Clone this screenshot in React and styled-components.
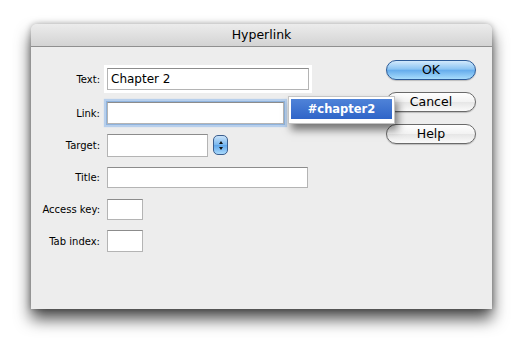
import styled, { createGlobalStyle } from "styled-components"

const Global = createGlobalStyle`
  html, body { margin: 0; padding: 0; background: #fff; }
  body { font-family: "Lucida Grande", "DejaVu Sans", sans-serif; color: #000; }
`

const Page = styled.div`
  width: 519px;
  height: 340px;
  padding: 24px 0 0 31px;
  box-sizing: border-box;
`

const Window = styled.div`
  width: 461px;
  height: 285px;
  display: flex;
  flex-direction: column;
  border-radius: 6px 6px 0 0;
  background: #ededed;
  box-shadow: 0 10px 16px rgba(0, 0, 0, 0.7), 0 0 6px rgba(0, 0, 0, 0.3);
`

const TitleBar = styled.div`
  height: 22px;
  flex: none;
  border-radius: 6px 6px 0 0;
  border-bottom: 1px solid #8f8f8f;
  background: linear-gradient(#ececec, #d3d3d3);
  font-size: 12.5px;
  line-height: 22px;
  text-align: center;
`

const Body = styled.div`
  flex: 1;
  display: flex;
  justify-content: space-between;
  padding: 13px 16px 0 0;
`

const Form = styled.div`
  display: flex;
  flex-direction: column;
  margin-top: 3px;
`

const Row = styled.div`
  display: grid;
  grid-template-columns: 69px auto;
  column-gap: 7px;
  align-items: center;
  height: 32px;
  margin-bottom: ${p => p.$gap || 0}px;
`

const Label = styled.label`
  font-size: 10px;
  text-align: right;
`

const FieldWrap = styled.div`
  position: relative;
  display: flex;
  align-items: center;
  gap: 5px;
`

const Field = styled.input`
  box-sizing: border-box;
  width: ${p => p.$w}px;
  height: ${p => p.$h || 22}px;
  margin: 0;
  padding: 0 3px;
  border: 1px solid #b4b4b4;
  border-top-color: #8c8c8c;
  background: #fff;
  font-family: "Lucida Grande", "DejaVu Sans", sans-serif;
  font-size: 12px;
  outline: none;
  box-shadow: ${p =>
    p.$ring === "blue"
      ? "0 0 0 1px #8fb3dd, 0 0 1px 3px #b7cfec"
      : p.$ring === "white"
      ? "0 0 0 3px #fff"
      : "none"};
`

const Stepper = styled.div`
  width: 15px;
  height: 20px;
  box-sizing: border-box;
  border: 1px solid #3b5e8e;
  border-radius: 5px;
  background: linear-gradient(#c9e3fa, #79b7ee 50%, #5ea6ea 51%, #a9d9fb);
  display: flex;
  flex-direction: column;
  align-items: center;
  justify-content: center;
  gap: 3px;
`

const Arrow = styled.div`
  width: 0;
  height: 0;
  border-left: 2.5px solid transparent;
  border-right: 2.5px solid transparent;
  ${p => (p.$down ? "border-top: 3px solid #111;" : "border-bottom: 3px solid #111;")}
`

const Popup = styled.div`
  position: absolute;
  left: 181px;
  top: -6px;
  width: 107px;
  height: 28px;
  box-sizing: border-box;
  padding: 2px;
  background: #fff;
  border: 1px solid #c4c4c4;
  box-shadow: 3px 6px 8px rgba(0, 0, 0, 0.5);
  z-index: 2;
`

const Option = styled.div`
  height: 20px;
  background: linear-gradient(#4f83d8, #2f65c8);
  color: #fff;
  font-weight: bold;
  font-size: 11.5px;
  line-height: 20px;
  text-align: center;
`

const Buttons = styled.div`
  display: flex;
  flex-direction: column;
  gap: 12px;
`

const Button = styled.button`
  width: 90px;
  height: 20px;
  margin: 0;
  padding: 0;
  border-radius: 10px;
  font-family: "Lucida Grande", "DejaVu Sans", sans-serif;
  font-size: 12.5px;
  line-height: 18px;
  color: #000;
  border: 1px solid ${p => (p.$primary ? "#2c5b98" : "#6a6a6a")};
  background: ${p =>
    p.$primary
      ? "linear-gradient(#d2e9fc, #8cc5f3 45%, #66adec 52%, #a7dcfc)"
      : "linear-gradient(#ffffff, #f2f2f2 50%, #e6e6e6 52%, #fafafa)"};
  box-shadow: 0 1px 1px rgba(0, 0, 0, 0.2);
`

export default function App() {
  return (
    <Page>
      <Global />
      <Window>
        <TitleBar>Hyperlink</TitleBar>
        <Body>
          <Form>
            <Row $gap={2}>
              <Label>Text:</Label>
              <FieldWrap>
                <Field $w={202} $h={22} $ring="white" defaultValue="Chapter 2" />
              </FieldWrap>
            </Row>
            <Row>
              <Label>Link:</Label>
              <FieldWrap>
                <Field $w={177} $h={22} $ring="blue" />
                <Popup>
                  <Option>#chapter2</Option>
                </Popup>
              </FieldWrap>
            </Row>
            <Row>
              <Label>Target:</Label>
              <FieldWrap>
                <Field $w={101} $h={23} />
                <Stepper>
                  <Arrow />
                  <Arrow $down />
                </Stepper>
              </FieldWrap>
            </Row>
            <Row>
              <Label>Title:</Label>
              <FieldWrap>
                <Field $w={201} $h={21} />
              </FieldWrap>
            </Row>
            <Row>
              <Label>Access key:</Label>
              <FieldWrap>
                <Field $w={36} $h={21} />
              </FieldWrap>
            </Row>
            <Row>
              <Label>Tab index:</Label>
              <FieldWrap>
                <Field $w={36} $h={22} />
              </FieldWrap>
            </Row>
          </Form>
          <Buttons>
            <Button $primary>OK</Button>
            <Button>Cancel</Button>
            <Button>Help</Button>
          </Buttons>
        </Body>
      </Window>
    </Page>
  )
}
